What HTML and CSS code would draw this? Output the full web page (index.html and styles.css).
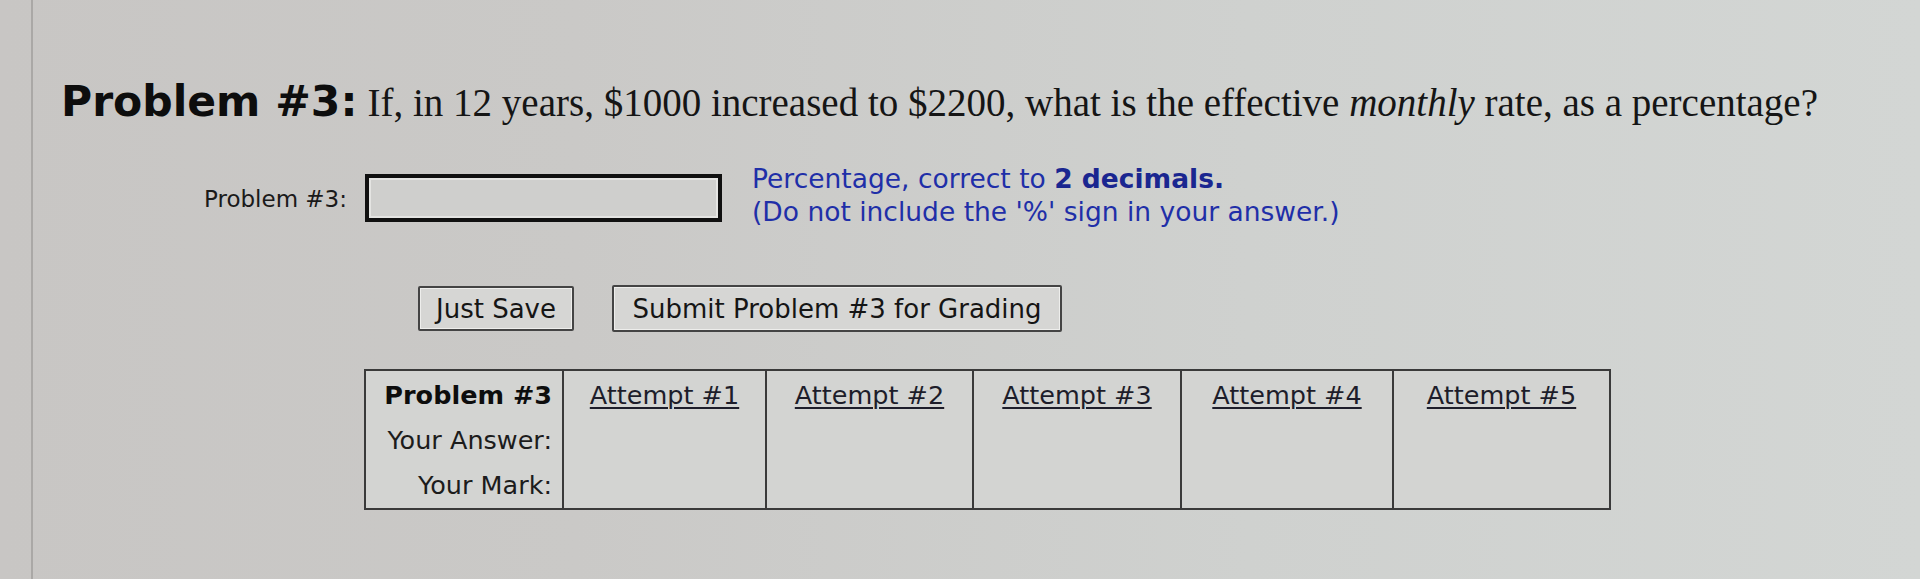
FILE: index.html
```html
<!DOCTYPE html>
<html>
<head>
<meta charset="utf-8">
<link rel="stylesheet" href="styles.css">
</head>
<body>
<div class="page">
  <div class="content">
    <h1 class="title"><span class="title-label">Problem #3:</span> <span class="question">If, in 12 years, $1000 increased to $2200, what is the effective <i>monthly</i> rate, as a percentage?</span></h1>

    <div class="answer-row">
      <label class="answer-label" for="ans">Problem #3:</label>
      <input class="answer-input" id="ans" type="text">
      <div class="hint">
        <div>Percentage, correct to <b>2 decimals.</b></div>
        <div>(Do not include the '%' sign in your answer.)</div>
      </div>
    </div>

    <div class="buttons">
      <button class="btn btn-save">Just Save</button>
      <button class="btn btn-submit">Submit Problem #3 for Grading</button>
    </div>

    <table class="attempts">
      <colgroup>
        <col class="w0"><col class="w1"><col class="w2"><col class="w3"><col class="w4"><col class="w5">
      </colgroup>
      <tr>
        <td class="head-col">
          <div class="hc-line hc-bold">Problem #3</div>
          <div class="hc-line">Your Answer:</div>
          <div class="hc-line">Your Mark:</div>
        </td>
        <td class="att"><a href="#">Attempt #1</a></td>
        <td class="att"><a href="#">Attempt #2</a></td>
        <td class="att"><a href="#">Attempt #3</a></td>
        <td class="att"><a href="#">Attempt #4</a></td>
        <td class="att"><a href="#">Attempt #5</a></td>
      </tr>
    </table>
  </div>
</div>
</body>
</html>
```

FILE: styles.css
```css
html, body {
  margin: 0;
  padding: 0;
  width: 1920px;
  height: 579px;
  overflow: hidden;
}
body {
  background: linear-gradient(90deg, #c8c6c4 0%, #cac9c7 30%, #cfd1cf 65%, #d3d6d4 100%);
  font-family: "DejaVu Sans", Verdana, sans-serif;
  color: #111;
}
.page {
  height: 579px;
  margin-left: 31px;
  border-left: 2px solid #aaa8a6;
  box-sizing: border-box;
}
.content {
  padding-left: 28px;
  padding-top: 72px;
}
.title {
  margin: 0;
  font-weight: normal;
  white-space: nowrap;
  line-height: 60px;
}
.title-label {
  font-family: "DejaVu Sans", Verdana, sans-serif;
  font-weight: bold;
  font-size: 42.5px;
  color: #0d0d0d;
}
.question {
  font-family: "Liberation Serif", "Times New Roman", serif;
  font-size: 39px;
  color: #151515;
}
.answer-row {
  display: flex;
  align-items: flex-start;
  margin-top: 39px;
}
.answer-label {
  width: 286px;
  text-align: right;
  font-size: 23px;
  padding-top: 12px;
  color: #1a1a1a;
}
.answer-input {
  margin-left: 18px;
  width: 357px;
  height: 48px;
  box-sizing: border-box;
  border: 4px solid #101010;
  box-shadow: inset 0 0 0 2px #e4e4e2;
  background: #cfcfcd;
  outline: none;
}
.hint {
  margin-left: 30px;
  margin-top: -12px;
  color: #1f2fa8;
  font-size: 26.5px;
  line-height: 33px;
}
.hint b {
  font-weight: bold;
  color: #1a2690;
}
.buttons {
  display: flex;
  align-items: center;
  margin-top: 57px;
  margin-left: 357px;
  gap: 38px;
}
.btn {
  font-family: "DejaVu Sans", Verdana, sans-serif;
  font-size: 26px;
  color: #151515;
  background: #d6d6d4;
  border: 2px solid #444;
  border-radius: 2px;
  box-shadow: inset 0 0 0 1px #eeeeec;
  height: 45px;
  padding: 0;
}
.btn-save {
  width: 156px;
}
.btn-submit {
  width: 450px;
  height: 47px;
}
.attempts {
  margin-top: 37px;
  margin-left: 303px;
  border-collapse: collapse;
  table-layout: fixed;
  width: 1245px;
  border: 2px solid #3a3a3a;
  font-size: 25.5px;
  height: 138px;
}
.w0 { width: 198px; }
.w1 { width: 203px; }
.w2 { width: 207px; }
.w3 { width: 208px; }
.w4 { width: 212px; }
.w5 { width: 217px; }
.attempts td {
  border: 2px solid #3a3a3a;
  vertical-align: top;
  padding: 2px 0 0 0;
  background: #d3d4d2;
}
.attempts td.head-col {
  text-align: right;
  padding-right: 10px;
}
.hc-line {
  height: 45px;
  line-height: 45px;
  color: #1c1c1c;
  white-space: nowrap;
}
.hc-bold {
  font-weight: bold;
  color: #0d0d0d;
}
.att {
  text-align: center;
  line-height: 45px;
  white-space: nowrap;
}
.att a {
  color: #1d1d2a;
  text-decoration: underline;
  text-decoration-thickness: 2px;
  text-underline-offset: 3px;
}
```
